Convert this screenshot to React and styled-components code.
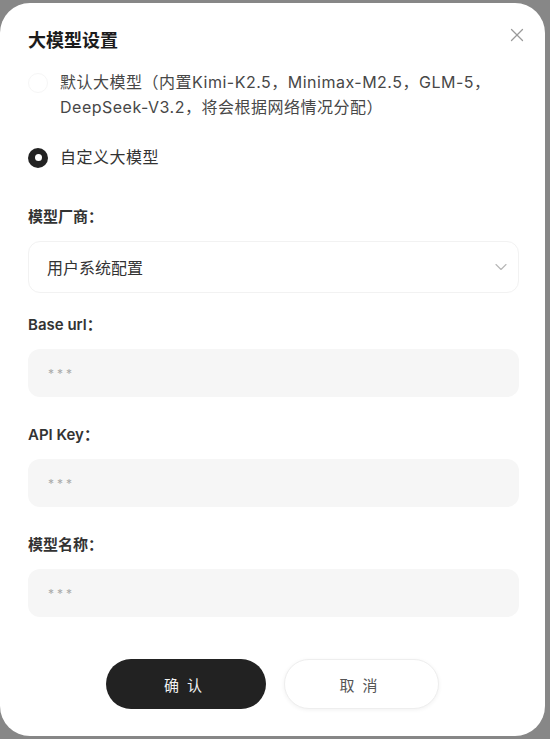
import React from "react";
import styled, { createGlobalStyle } from "styled-components";
import { X, ChevronDown } from "lucide-react";

const Global = createGlobalStyle`
  html, body { margin: 0; padding: 0; background: #878787; }
  body { font-family: "Inter", "Noto Sans CJK SC", sans-serif; width: 550px; height: 739px; overflow: hidden; }
  * { box-sizing: border-box; }
`;

const Backdrop = styled.div`
  padding-top: 3px;
  width: 550px;
  height: 739px;
`;

const Dialog = styled.div`
  width: 545px;
  height: 733px;
  background: #fff;
  border-radius: 30px;
  padding: 25px 26px 0 28px;
  display: flex;
  flex-direction: column;
`;

const Header = styled.div`
  display: flex;
  justify-content: space-between;
  align-items: flex-start;
  height: 26px;
`;

const Title = styled.h2`
  margin: 0;
  font-size: 18px;
  line-height: 26px;
  font-weight: 600;
  color: #1c1c1c;
`;

const CloseBtn = styled.button`
  border: 0;
  background: none;
  padding: 0;
  margin: -4px -9px 0 0;
  color: #9a9a9a;
  display: flex;
`;

const Options = styled.div`
  display: flex;
  flex-direction: column;
  gap: 25px;
  margin-top: 16px;
`;

const Option = styled.label`
  display: flex;
  align-items: flex-start;
  gap: 12px;
  font-size: 16px;
  line-height: 25px;
  letter-spacing: 0.5px;
  color: ${(p) => (p.$active ? "#333" : "#474747")};
`;

const Radio = styled.span`
  flex: none;
  width: 20px;
  height: 20px;
  margin-top: 2.5px;
  border-radius: 50%;
  display: flex;
  align-items: center;
  justify-content: center;
  background: ${(p) => (p.$checked ? "#222" : "#fff")};
  border: ${(p) => (p.$checked ? "none" : "1.5px solid #f6f6f6")};
  &::after {
    content: "";
    display: ${(p) => (p.$checked ? "block" : "none")};
    width: 7px;
    height: 7px;
    border-radius: 50%;
    background: #fff;
  }
`;

const Form = styled.div`
  display: flex;
  flex-direction: column;
  margin-top: 37px;
`;

const Label = styled.div`
  font-size: 15px;
  line-height: 20px;
  font-weight: 600;
  color: #333;
  margin-top: ${(p) => p.$gap || 0}px;
`;

const Select = styled.div`
  margin-top: 14px;
  height: 52px;
  border: 1px solid #f2f2f2;
  border-radius: 12px;
  display: flex;
  align-items: center;
  justify-content: space-between;
  padding: 0 7px 0 18px;
  font-size: 16px;
  color: #333;
`;

const Chevron = styled(ChevronDown)`
  color: #b8b8b8;
`;

const Input = styled.input`
  margin-top: 14px;
  height: 48px;
  border: 0;
  outline: none;
  border-radius: 12px;
  background: #f6f6f6;
  padding: 0 20px;
  font-family: inherit;
  font-size: 12px;
  color: #333;
  letter-spacing: 3px;
  &::placeholder {
    color: #a9a9a9;
  }
`;

const Footer = styled.div`
  display: flex;
  justify-content: center;
  gap: 18px;
  margin-top: 42px;
  padding-right: 2px;
`;

const Button = styled.button`
  width: ${(p) => (p.$primary ? 160 : 155)}px;
  height: 50px;
  border-radius: 25px;
  font-family: inherit;
  font-size: 15px;
  letter-spacing: 8px;
  padding-left: 8px;
  background: ${(p) => (p.$primary ? "#222" : "#fff")};
  color: ${(p) => (p.$primary ? "#f2f2f2" : "#555")};
  border: ${(p) => (p.$primary ? "none" : "1px solid #eeeeee")};
  box-shadow: ${(p) => (p.$primary ? "none" : "0 1px 4px rgba(0,0,0,0.06)")};
`;

export default function App() {
  return (
    <>
      <Global />
      <Backdrop>
        <Dialog>
          <Header>
            <Title>大模型设置</Title>
            <CloseBtn aria-label="close">
              <X size={22} strokeWidth={1.4} />
            </CloseBtn>
          </Header>
          <Options>
            <Option>
              <Radio />
              <span>
                默认大模型（内置Kimi-K2.5，Minimax-M2.5，GLM-5，
                <br />
                DeepSeek-V3.2，将会根据网络情况分配）
              </span>
            </Option>
            <Option $active>
              <Radio $checked />
              <span>自定义大模型</span>
            </Option>
          </Options>
          <Form>
            <Label>模型厂商：</Label>
            <Select>
              <span>用户系统配置</span>
              <Chevron size={20} strokeWidth={1.4} />
            </Select>
            <Label $gap={22}>Base url：</Label>
            <Input placeholder="***" />
            <Label $gap={28}>API Key：</Label>
            <Input placeholder="***" />
            <Label $gap={28}>模型名称：</Label>
            <Input placeholder="***" />
          </Form>
          <Footer>
            <Button $primary>确认</Button>
            <Button>取消</Button>
          </Footer>
        </Dialog>
      </Backdrop>
    </>
  );
}
